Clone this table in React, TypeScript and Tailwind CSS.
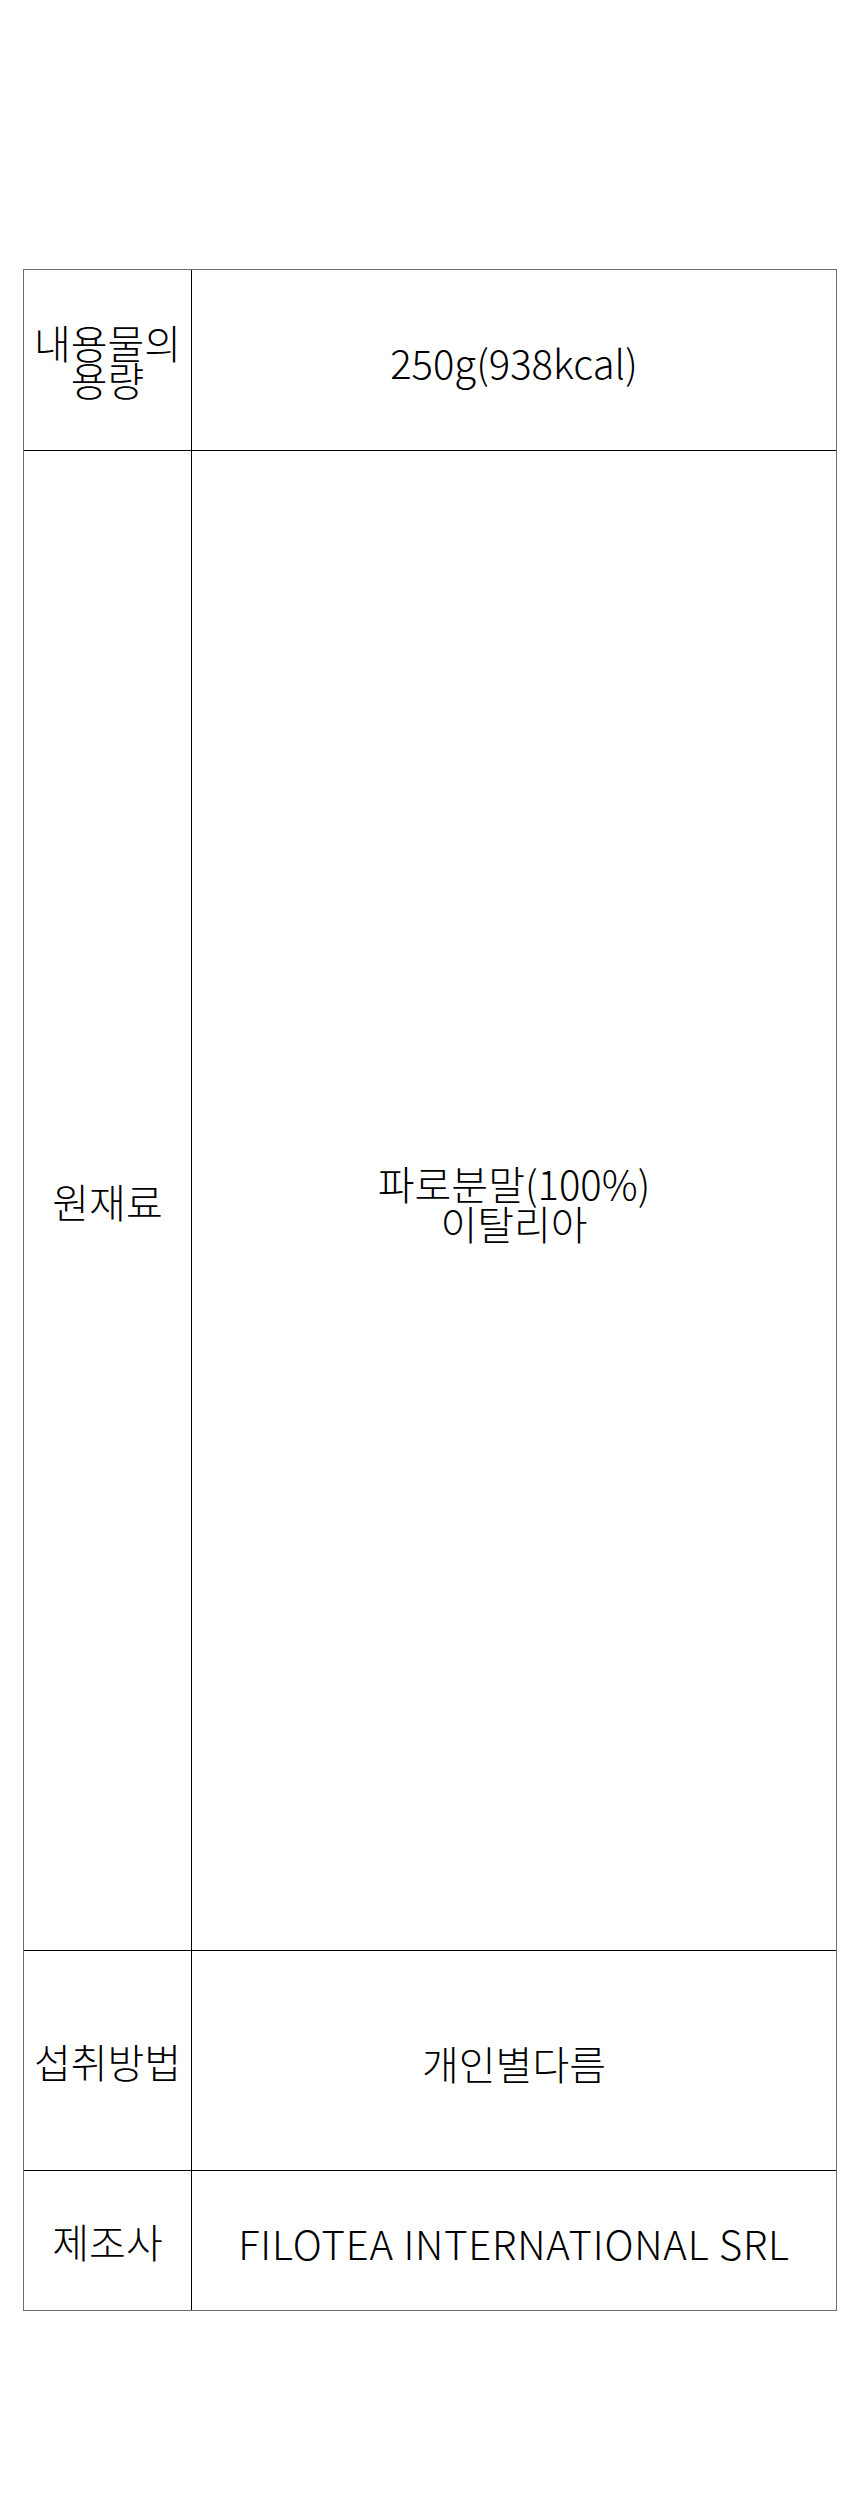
const rows: { label: string[]; value: string[]; h: string; latin?: boolean; last?: boolean }[] = [
  { label: ['내용물의', '용량'], value: ['250g(938kcal)'], h: 'h-[181px]' },
  { label: ['원재료'], value: ['파로분말(100%)', '이탈리아'], h: 'h-[1500px]' },
  { label: ['섭취방법'], value: ['개인별다름'], h: 'h-[220px]' },
  { label: ['제조사'], value: ['FILOTEA INTERNATIONAL SRL'], h: 'h-[139px]', latin: true, last: true },
];

function Lines({ lines }: { lines: string[] }) {
  return (
    <>
      {lines.map((t, i) => (
        <span key={t}>
          {i > 0 && <br />}
          {t}
        </span>
      ))}
    </>
  );
}

export default function App() {
  return (
    <div
      className="w-[860px] h-[2500px] bg-white pt-[269px] pl-[23px] text-black font-light"
      style={{ fontFamily: '"Noto Sans CJK KR", "Noto Sans", sans-serif' }}
    >
      <div className="w-[814px] border border-[#6e6e6e]">
        {rows.map((row) => (
          <div
            key={row.label.join('')}
            className={`flex ${row.h} ${row.last ? '' : 'border-b border-black'}`}
          >
            <div className="w-[168px] shrink-0 border-r border-black flex items-center justify-center pt-[2px]">
              <p className="text-center text-[40px] leading-[0.92]">
                <Lines lines={row.label} />
              </p>
            </div>
            <div className="flex-1 flex items-center justify-center pt-[4px]">
              <p className={`text-center text-[40px] leading-[1] ${row.latin ? 'tracking-[0.8px]' : ''}`}>
                <Lines lines={row.value} />
              </p>
            </div>
          </div>
        ))}
      </div>
    </div>
  );
}
